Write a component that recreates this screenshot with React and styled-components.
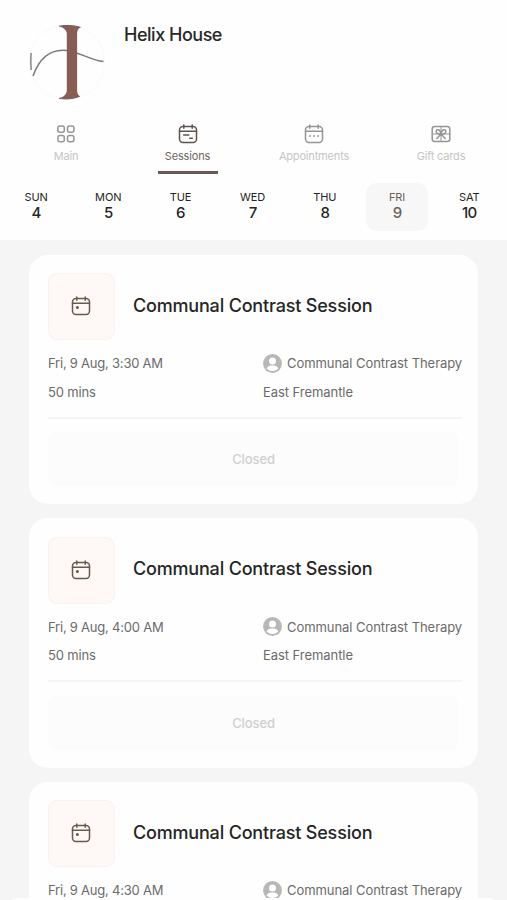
import styled, { createGlobalStyle } from 'styled-components'

const tabs = [
  { label: 'Main', icon: 'grid' },
  { label: 'Sessions', icon: 'session' },
  { label: 'Appointments', icon: 'appointment' },
  { label: 'Gift cards', icon: 'gift' },
]

const days = [
  { name: 'SUN', date: 4 },
  { name: 'MON', date: 5 },
  { name: 'TUE', date: 6 },
  { name: 'WED', date: 7 },
  { name: 'THU', date: 8 },
  { name: 'FRI', date: 9 },
  { name: 'SAT', date: 10 },
]

const sessions = ['3:30 AM', '4:00 AM', '4:30 AM']

const Logo = () => (
  <svg width="76" height="76" viewBox="0 0 76 76" fill="none">
    <circle cx="38" cy="38" r="37.5" fill="#fefefe" stroke="#fafafa" />
    <path d="M2.1 29C1.6 35 1.6 40 2.2 46" stroke="#8b8d88" strokeWidth="1.6" />
    <path
      d="M4 52C10 35 20.5 26.2 34 26.2C48 26.2 60 36 74.5 37.6"
      stroke="#7b7c77"
      strokeWidth="1.5"
    />
    <path
      d="M30 2.2C36 1 45 1.2 51.5 3.3C48.8 5 48.1 7 48.1 10V66C48.1 69 48.9 71 50.8 72.3C44 75 37 75.6 30 74.2C35.5 72.8 37.8 70 37.8 66V10C37.8 6 34.5 3.6 30 2.2Z"
      fill="#875d55"
    />
    <path d="M30 2.2C36 1 45 1.2 51.5 3.3" stroke="#6f625c" />
    <path d="M30 74.2C37 75.6 44 75 50.8 72.3" stroke="#6f625c" />
  </svg>
)

const Icon = ({ name }) => (
  <svg
    width="20"
    height="20"
    viewBox="0 0 20 20"
    fill="none"
    stroke="currentColor"
    strokeWidth="1.5"
    strokeLinecap="round"
    strokeLinejoin="round"
  >
    {name === 'grid' && (
      <>
        <rect x="1.9" y="1.9" width="6.4" height="6.4" rx="2" />
        <rect x="11.5" y="1.9" width="6.4" height="6.4" rx="2" />
        <rect x="1.9" y="11.4" width="6.4" height="6.4" rx="2" />
        <rect x="11.5" y="11.4" width="6.4" height="6.4" rx="2" />
      </>
    )}
    {name === 'gift' && (
      <>
        <rect x="1.2" y="2.5" width="17.6" height="15" rx="2.5" />
        <path d="M1.2 10h17.6M10 2.5v15" strokeWidth="1" />
        <path d="M10 10C6 10 5.2 8.8 5.2 7.4C5.2 4.7 9.2 5 10 10C10.8 5 14.8 4.7 14.8 7.4C14.8 8.8 14 10 10 10ZM10 10L5.8 14.4M10 10l4.2 4.4" />
      </>
    )}
    {name !== 'grid' && name !== 'gift' && (
      <>
        <rect x="1.5" y="2.5" width="17" height="16" rx="3.4" />
        <path d="M5.8 .9v3.3M14.2 .9v3.3M1.5 7.2h17" />
      </>
    )}
    {name === 'session' && <path d="M5.6 11h5.2M11.7 14.2h2.7" />}
    {name === 'appointment' && (
      <path d="M6 12h.01M10 12h.01M14 12h.01" strokeWidth="1.9" />
    )}
    {name === 'calendar' && <path d="M6.4 11.6h.01" strokeWidth="3" />}
  </svg>
)

const Avatar = () => (
  <svg width="19" height="19" viewBox="0 0 19 19">
    <circle cx="9.5" cy="9.5" r="9.4" fill="#b7b7b7" />
    <circle cx="9.5" cy="7" r="3.5" fill="#fff" />
    <path
      d="M3.6 14.5C4.6 12 6.7 11.6 9.5 11.6S14.4 12 15.4 14.5C13.8 16.2 11.8 17 9.5 17S5.2 16.2 3.6 14.5Z"
      fill="#fff"
    />
  </svg>
)

const SessionCard = ({ time }) => (
  <Card>
    <CardHeader>
      <Tile>
        <Icon name="calendar" />
      </Tile>
      <Title>Communal Contrast Session</Title>
    </CardHeader>
    <Details>
      <Detail $tracking="-0.22px">Fri, 9 Aug, {time}</Detail>
      <Detail $tracking="-0.06px">
        <Avatar />
        Communal Contrast Therapy
      </Detail>
      <Detail $tracking="-0.18px">50 mins</Detail>
      <Detail $tracking="-0.06px">East Fremantle</Detail>
    </Details>
    <Divider />
    <ClosedButton disabled>Closed</ClosedButton>
  </Card>
)

const App = () => {
  return (
    <Page>
      <GlobalStyle />
      <Header>
        <Brand>
          <Logo />
          <BrandName>Helix House</BrandName>
        </Brand>
        <Tabs>
          {tabs.map((tab) => (
            <Tab key={tab.label} $active={tab.label === 'Sessions'}>
              <Icon name={tab.icon} />
              <span>{tab.label}</span>
            </Tab>
          ))}
        </Tabs>
        <Week>
          {days.map((day) => (
            <Day key={day.name} $active={day.date === 9}>
              <DayName>{day.name}</DayName>
              <DayDate>{day.date}</DayDate>
            </Day>
          ))}
        </Week>
      </Header>
      <List>
        {sessions.map((time) => (
          <SessionCard key={time} time={time} />
        ))}
      </List>
      <BottomSheet />
    </Page>
  )
}

export default App

const GlobalStyle = createGlobalStyle`
  * {
    box-sizing: border-box;
  }
  body {
    margin: 0;
    overflow: hidden;
    font-family: Inter, 'Liberation Sans', sans-serif;
  }
`

const Page = styled.div`
  position: relative;
  height: 900px;
  overflow: hidden;
  background: #f5f5f5;
`

const Header = styled.header`
  height: 240px;
  background: #fefefe;
`

const Brand = styled.div`
  display: flex;
  align-items: flex-start;
  gap: 19px;
  height: 124px;
  padding: 24px 0 0 29px;
`

const BrandName = styled.h1`
  margin: 0;
  font-size: 18px;
  line-height: 22px;
  font-weight: 500;
  letter-spacing: -0.48px;
  color: #292929;
`

const Tabs = styled.nav`
  display: grid;
  grid-template-columns: 132px 111px 142px 112px;
  height: 50px;
`

const Tab = styled.div`
  display: flex;
  flex-direction: column;
  align-items: center;
  justify-self: center;
  width: ${({ $active }) => ($active ? '60px' : 'auto')};
  color: ${({ $active }) => ($active ? '#5d554f' : '#969696')};
  border-bottom: ${({ $active }) => ($active ? '3px solid #6e5752' : '0')};

  span {
    margin-top: 5px;
    font-size: 11px;
    line-height: 14px;
    letter-spacing: -0.17px;
    white-space: nowrap;
    color: ${({ $active }) => ($active ? '#6b6662' : '#c5c5c5')};
  }
`

const Week = styled.div`
  display: grid;
  grid-template-columns: repeat(7, 72.2px);
  justify-items: center;
  padding-top: 9px;
`

const Day = styled.div`
  display: flex;
  flex-direction: column;
  align-items: center;
  width: 62px;
  height: 48px;
  padding-top: 7px;
  border-radius: 11px;
  background: ${({ $active }) => ($active ? '#f7f7f7' : 'transparent')};
  color: ${({ $active }) => ($active ? '#68615d' : '#252525')};
`

const DayName = styled.span`
  font-size: 11px;
  line-height: 14px;
  letter-spacing: -0.1px;
`

const DayDate = styled.span`
  font-size: 15px;
  line-height: 18px;
  font-weight: 500;
  letter-spacing: -0.7px;
`

const List = styled.main`
  display: flex;
  flex-direction: column;
  gap: 14px;
  padding: 14.5px 29px 0;
`

const Card = styled.article`
  flex-shrink: 0;
  height: 249.6px;
  padding: 18.5px 16px 0 19px;
  border-radius: 19px;
  background: #fefefe;
`

const CardHeader = styled.div`
  display: flex;
  align-items: center;
  gap: 18px;
`

const Tile = styled.div`
  display: grid;
  place-items: center;
  width: 67px;
  height: 67px;
  padding-right: 1px;
  padding-bottom: 1px;
  border: 1px solid #f8f2f0;
  border-radius: 9px;
  background: #fef8f6;
  color: #655c50;
`

const Title = styled.h2`
  margin: 0;
  padding-bottom: 2px;
  font-size: 18px;
  line-height: 22px;
  font-weight: 500;
  letter-spacing: -0.18px;
  color: #252525;
`

const Details = styled.div`
  display: grid;
  grid-template-columns: 215px 1fr;
  grid-auto-rows: 19px;
  row-gap: 9.5px;
  margin-top: 13.5px;
`

const Detail = styled.div`
  display: flex;
  align-items: center;
  gap: 5px;
  font-size: 13px;
  letter-spacing: ${({ $tracking }) => $tracking};
  white-space: nowrap;
  color: #6b6b6b;
`

const Divider = styled.div`
  height: 2px;
  margin-top: 15.5px;
  background: #f5f5f5;
`

const ClosedButton = styled.button`
  display: block;
  width: 411px;
  height: 54px;
  margin-top: 13.5px;
  padding: 0;
  border: 0;
  border-radius: 8px;
  background: #fcfcfc;
  font-family: inherit;
  font-size: 13px;
  font-weight: 500;
  letter-spacing: -0.1px;
  color: #cfcfcf;
`

const BottomSheet = styled.div`
  position: absolute;
  left: 0;
  right: 0;
  bottom: -18px;
  height: 20px;
  border-radius: 19px 19px 0 0;
  background: #fefefe;
`
